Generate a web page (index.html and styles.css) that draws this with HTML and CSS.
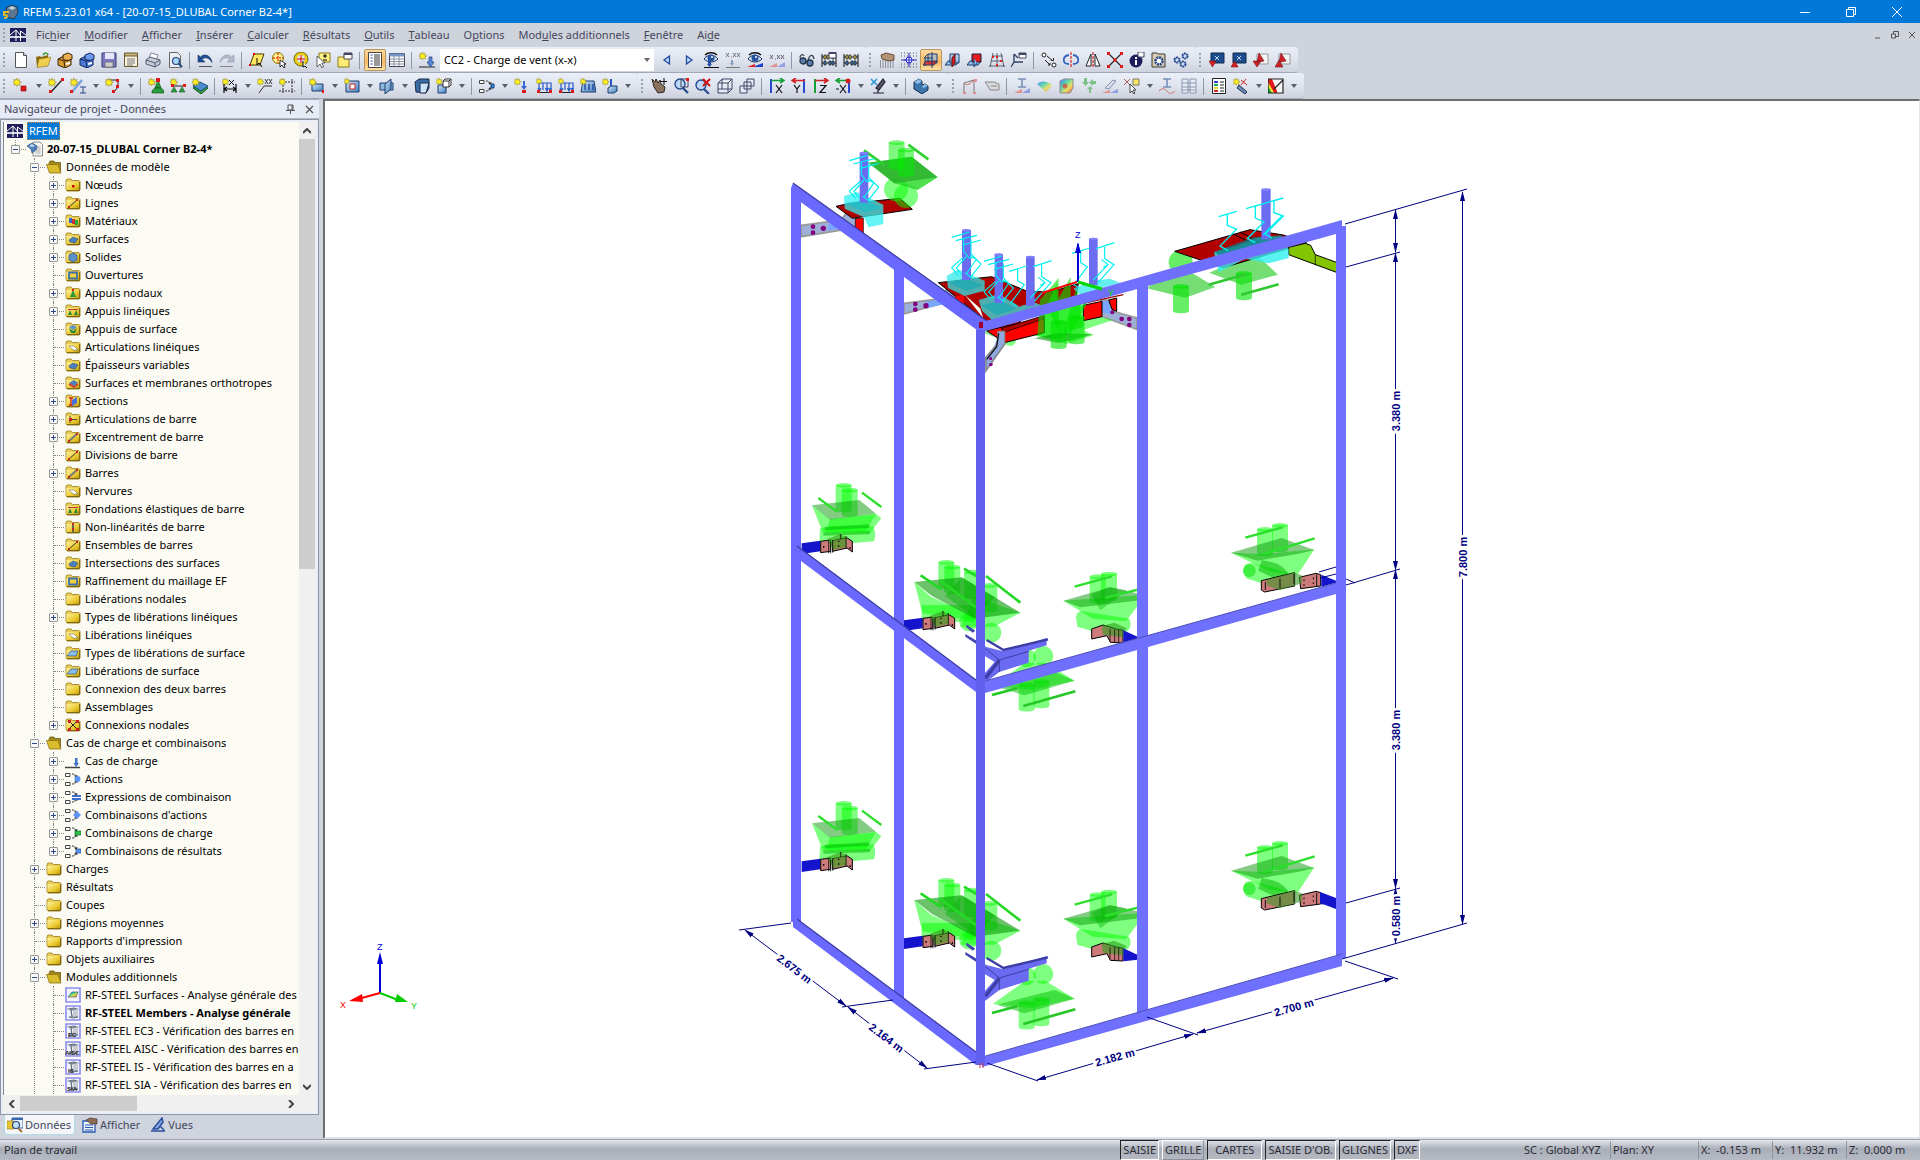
FILE: index.html
```html
<!DOCTYPE html>
<html lang="fr">
<head>
<meta charset="utf-8">
<title>RFEM 5.23.01 x64 - [20-07-15_DLUBAL Corner B2-4*]</title>
<link rel="stylesheet" href="styles.css">
</head>
<body>
<svg class="defs" aria-hidden="true">
  <defs>
    <linearGradient id="gold" x1="0" y1="0" x2="1" y2="1"><stop offset="0" stop-color="#fff2a0"/><stop offset=".6" stop-color="#ecc92e"/><stop offset="1" stop-color="#b8930f"/></linearGradient>
    <linearGradient id="steel" x1="0" y1="0" x2="1" y2="1"><stop offset="0" stop-color="#cfe4f7"/><stop offset="1" stop-color="#3f7fbf"/></linearGradient>
    <linearGradient id="rainbow" x1="0" y1="0" x2="1" y2="1"><stop offset="0" stop-color="#3060ff"/><stop offset=".35" stop-color="#30d0a0"/><stop offset=".65" stop-color="#f0e040"/><stop offset="1" stop-color="#f03020"/></linearGradient>
    <marker id="arr" viewBox="0 0 10 6" refX="9" refY="3" markerWidth="10" markerHeight="6" markerUnits="userSpaceOnUse" orient="auto-start-reverse"><path d="M0 0.5L10 3L0 5.5z" fill="#000080"/></marker>
  </defs>
  <symbol id="star" viewBox="0 0 16 16"><path d="M4 0l1 2.500 2-1-.5 2.300L9 4.500 6.800 5.500 7.500 8 5 7 4 9 3.200 7 1 7.800 1.500 5.500-.5 4.500 1.600 3.500 1 1.300 3.200 2.400z" fill="#ffee22" stroke="#8c8420" stroke-width=".6"/></symbol>
  <symbol id="bridge" viewBox="0 0 16 14"><path d="M0 0h16v14H0z" fill="#20205f"/><path d="M0 9h16" stroke="#fff" stroke-width="1.600"/><path d="M0 7L6 2v11M6 2l5 6M10.500 3v10M10.500 3L16 7" stroke="#fff" fill="none"/></symbol>
  <symbol id="folder" viewBox="0 0 16 14"><path d="M1 3V2l1-1h4l1.500 1.500H14l1 1V12l-1 1H2l-1-1z" fill="#e8ce58" stroke="#9c7f1c" stroke-width=".8"/><path d="M1.500 4H14.500v8.500h-13z" fill="url(#gold)"/><path d="M14.600 4v8.600H2" stroke="#77620f" fill="none"/></symbol>
  <symbol id="folder-open" viewBox="0 0 16 14"><path d="M3 3l1-2h4l1 1.500h5.500V12H4z" fill="#a48a1a" stroke="#6d5a0c" stroke-width=".8"/><path d="M.5 4.500H12l3 8.500H3.500z" fill="#d9bd2c" stroke="#8c7412" stroke-width=".8"/></symbol>
  <symbol id="model" viewBox="0 0 16 16"><path d="M6 1h7l2.500 2.500V15H6z" fill="#f4f4f4" stroke="#8a8a8a"/><path d="M8.500 6h5M8.500 8h5M8.500 10h5M8.500 12h5" stroke="#999" stroke-width=".8"/><path d="M0 5l5-3 5 3-1 4-4 3-1-4z" fill="#4d7fb8" stroke="#2a5080" stroke-width=".7"/><path d="M2 5l3-2 3 2-3 1z" fill="#c5ddf2"/></symbol>
  <symbol id="combi" viewBox="0 0 16 16"><path d="M.5 2.500h4.500v3H.5zM.5 11.500h4.500v3H.5z" fill="#fff" stroke="#444"/><path d="M7 3c3 0 4 1 4 3M7 13c3 0 4-1 4-3" stroke="#333" fill="none" stroke-dasharray="2 1"/><path d="M9 4.500h4l-2 2.500zM9 11.500h4L11 9z" fill="#333"/></symbol>
  <symbol id="module" viewBox="0 0 16 16"><path d="M1 1h14v14H1z" fill="#f3f3fb" stroke="#8c8cf0" stroke-width="1.600"/></symbol>
  <symbol id="ibeam" viewBox="0 0 16 16"><path d="M4 4l5-1 3 1-5 1zM6 5l1 7M4 12l5-1 4 1-5 1z" fill="#ddd" stroke="#5a6a7c" stroke-width="1.200"/><path d="M8 5l5-1v7l-5 1z" fill="#c8ccd2"/></symbol>
  <symbol id="doc" viewBox="0 0 16 16"><path d="M2.500 .5h8l3 3v12h-11z" fill="#fff" stroke="#555"/><path d="M10.500 .5v3h3" fill="#ddd" stroke="#555"/></symbol>
  <symbol id="openf" viewBox="0 0 16 16"><path d="M1 5l4-1 1 1 7-2v9L2 15z" fill="#8a6a10"/><path d="M4 7l12-2-3 9-11 1.500z" fill="#f0cf50" stroke="#8a6a10" stroke-width=".6"/><path d="M8 3c2-3 5-2 5 0" stroke="#3a9a2a" fill="none" stroke-width="1.500"/></symbol>
  <symbol id="cab-o" viewBox="0 0 16 16"><path d="M1 7l6-3 7 2v7l-6 3-7-3z" fill="#d99a32" stroke="#3b260c"/><path d="M6 3l5-2 4 2v4l-5 2-4-2z" fill="#e8b050" stroke="#3b260c"/><path d="M1 7l6 2 1 7M7 9l4-1" stroke="#3b260c" fill="none"/><path d="M9 11l4-1v2l-4 1z" fill="#fff"/></symbol>
  <symbol id="cab-b" viewBox="0 0 16 16"><path d="M1 7l6-3 7 2v7l-6 3-7-3z" fill="#4a78d8" stroke="#14285c"/><path d="M6 3l5-2 4 2v4l-5 2-4-2z" fill="#6c98f0" stroke="#14285c"/><path d="M1 7l6 2 1 7M7 9l4-1" stroke="#14285c" fill="none"/><path d="M9 11l4-1v2l-4 1z" fill="#fff"/></symbol>
  <symbol id="save" viewBox="0 0 16 16"><path d="M1 1h14v14H1z" fill="#7d78c4" stroke="#3a3a6a"/><path d="M4 1h9v6H4z" fill="#e6e6f8"/><path d="M4 10h8v5H4z" fill="#ccc" stroke="#555" stroke-width=".6"/></symbol>
  <symbol id="saveall" viewBox="0 0 16 16"><path d="M1.500 2.500h13v12h-13z" fill="#f8f4e0" stroke="#6a5a2a"/><path d="M1.500 1h13v3h-13z" fill="#c8b47c" stroke="#6a5a2a"/><path d="M4 7h8M4 9h8M4 11h8M4 13h6" stroke="#777"/></symbol>
  <symbol id="print" viewBox="0 0 16 16"><path d="M4 6l2-5 7 2-2 5z" fill="#fff" stroke="#889"/><path d="M1 8l4-3 10 3v4l-5 3-9-3z" fill="#c5cad8" stroke="#555c70"/><path d="M1 8l9 3 5-3M10 11v4" stroke="#555c70" fill="none"/></symbol>
  <symbol id="preview" viewBox="0 0 16 16"><path d="M2.500 .5h8l3 3v12h-11z" fill="#eceef2" stroke="#666"/><circle cx="9" cy="9" r="3.500" fill="#aad4f4" stroke="#234a80" stroke-width="1.200"/><path d="M11.500 11.500L15 15" stroke="#234a80" stroke-width="2"/></symbol>
  <symbol id="undo" viewBox="0 0 16 16"><path d="M1 3v7h7L5 7.500c3-3 7-2 10 3C14 3 7 1 3.500 5z" fill="#1f4f96" stroke="#12305c" stroke-width=".6"/><path d="M2 14.500h13" stroke="#555"/></symbol>
  <symbol id="redo" viewBox="0 0 16 16"><path d="M15 3v7H8l3-2.500c-3-3-7-2-10 3C2 3 9 1 12.500 5z" fill="#b4bccb" stroke="#8c95a8" stroke-width=".6"/><path d="M1 14.500h13" stroke="#888"/></symbol>
  <symbol id="plane" viewBox="0 0 16 16"><path d="M5 2h10l-4 11H1z" fill="#ffe860" stroke="#443c00"/><path d="M8 6v7l2-2 3 4" fill="none" stroke="#000"/><path d="M4 1h2v2H4zM0 12h2v2H0z" fill="#d00"/></symbol>
  <symbol id="pick" viewBox="0 0 16 16"><circle cx="7" cy="6" r="5.500" fill="#fff088" stroke="#8a7a10"/><path d="M7 1v10M2 6h10" stroke="#d00" stroke-dasharray="2 1"/><path d="M9 8v7l2-2 2 3 1-1-1-3h2z" fill="#fff" stroke="#000" stroke-width=".8"/></symbol>
  <symbol id="ring" viewBox="0 0 16 16"><circle cx="8" cy="7" r="5.500" fill="none" stroke="#e8cc10" stroke-width="3"/><circle cx="8" cy="7" r="7" fill="none" stroke="#554a00" stroke-width=".8"/><path d="M8 3v8M4 7h8" stroke="#d00"/><path d="M10 9v6l2-1 2 2" stroke="#000" fill="#fff"/></symbol>
  <symbol id="pm" viewBox="0 0 16 16"><path d="M4 1h11v9H4z" fill="#fff088" stroke="#8a7a10"/><path d="M8 4h4M10 2v4M8 8h4" stroke="#000"/><path d="M2 4v11l3-3 2 4 1.500-1L7 11h3z" fill="#fff" stroke="#444" stroke-width=".8"/></symbol>
  <symbol id="win2" viewBox="0 0 16 16"><path d="M1 5h11v10H1z" fill="#ffec78" stroke="#8a7a10"/><path d="M7 1h8v6H7z" fill="#fff" stroke="#444"/><path d="M7 1h8v2H7z" fill="#446"/></symbol>
  <symbol id="sheet" viewBox="0 0 16 16"><path d="M1.500 .5h13v15h-13z" fill="#fff" stroke="#444"/><path d="M3.500 3h2M3.500 6h2M3.500 9h2M3.500 12h2" stroke="#24a"/><path d="M7 3h6M7 5h6M7 7h6M7 9h6M7 11h6M7 13h6" stroke="#333"/></symbol>
  <symbol id="grid" viewBox="0 0 16 16"><path d="M.5 1.500h15v13H.5z" fill="#fff" stroke="#445"/><path d="M.5 1.500h15v3H.5z" fill="#7496c8"/><path d="M1 7h14M1 9.500h14M1 12h14M5 4v10M10 4v10" stroke="#88909c"/></symbol>
  <symbol id="ldstar" viewBox="0 0 16 16"><use href="#star" width="14" height="14"/><path d="M0 15h16" stroke="#222"/><path d="M10 5h3v5h2l-3.500 5L8 10h2z" fill="#5a8ad8" stroke="#1c3c7c" stroke-width=".7"/></symbol>
  <symbol id="tleft" viewBox="0 0 16 16"><path d="M10.500 4v8L5 8z" fill="#c0dcfc" stroke="#234aa0" stroke-width="1.300"/></symbol>
  <symbol id="tright" viewBox="0 0 16 16"><path d="M5.500 4v8L11 8z" fill="#c0dcfc" stroke="#234aa0" stroke-width="1.300"/></symbol>
  <symbol id="eye" viewBox="0 0 16 11"><path d="M1 7c3-5 10-5 14 0-4 4-10 4-14 0z" fill="#cfe0f8" stroke="#18305c"/><circle cx="8" cy="6" r="3.500" fill="#24549c"/><circle cx="9" cy="5" r="1" fill="#fff"/><path d="M2 3c3-3 9-3 12 0" stroke="#111" fill="none" stroke-width="1.300"/></symbol>
  <symbol id="eyeload" viewBox="0 0 16 16"><use href="#eye" width="16" height="11"/><path d="M5 8h3v4h1l-2.500 3L4 12h1z" fill="#2450a8"/><path d="M1 15.500h15" stroke="#111"/></symbol>
  <symbol id="xxload" viewBox="0 0 16 16"><path d="M1 1l3 4M4 1L1 5M6 5h1M8 1l3 4M11 1L8 5M12 1l3 4M15 1l-3 4" stroke="#778"/><path d="M6 8h2v3h1l-2 3-2-3h1z" fill="#8a9cc0"/><path d="M1 15.500h14" stroke="#777"/></symbol>
  <symbol id="eyeres" viewBox="0 0 16 16"><use href="#eye" width="16" height="11"/><path d="M0 15h8v-3z" fill="#d22"/><path d="M16 11v4H8v-1z" fill="#24c"/></symbol>
  <symbol id="xxres" viewBox="0 0 16 16"><path d="M1 3l3 4M4 3L1 7M6 7h1M8 3l3 4M11 3L8 7M12 3l3 4M15 3l-3 4" stroke="#667"/><path d="M0 15h8v-4z" fill="#e09090"/><path d="M16 10v5H8z" fill="#98a0e0"/></symbol>
  <symbol id="specs" viewBox="0 0 16 16"><path d="M1 6C1 2 4 2 5 4M9 8c2-6 5-6 6-1M6 9l2 1" stroke="#345" fill="none" stroke-width="1.300"/><circle cx="4" cy="9" r="3" fill="#5c80b4" stroke="#234" stroke-width="1.300"/><circle cx="11" cy="11" r="3" fill="#5c80b4" stroke="#234" stroke-width="1.300"/></symbol>
  <symbol id="abacus" viewBox="0 0 16 16"><path d="M1 2v13M15 2v13M1 5h14M1 11h14" stroke="#111" fill="none"/><path d="M3 3h2v4H3zM6 3h2v4H6zM11 3h2v4h-2z" fill="#e8d060" stroke="#111" stroke-width=".7"/><path d="M3 9h2v4H3zM8 9h2v4H8zM11 9h2v4h-2z" fill="#48c" stroke="#111" stroke-width=".7"/></symbol>
  <symbol id="abacus2" viewBox="0 0 16 16"><use href="#abacus"/><path d="M8 0h7v6H8z" fill="#fff" stroke="#446"/><path d="M8 0h7v2H8z" fill="#446"/></symbol>
  <symbol id="hand" viewBox="0 0 16 16"><path d="M2 3l5-2 8 2v5l-5 1-7-2z" fill="#b49474" stroke="#4c3420" stroke-width=".8"/><path d="M1 9h14M1 11h14M1 13h14M1 15h14" stroke="#444" stroke-dasharray="1 1.500"/></symbol>
  <symbol id="snap" viewBox="0 0 16 16"><path d="M0 1h16M0 4h16M0 12h16M0 15h16M0 8h16" stroke="#555" stroke-dasharray="1 2"/><circle cx="8" cy="8" r="3" fill="#fff" stroke="#22c"/><path d="M8 1v14M1 8h14" stroke="#22c"/></symbol>
  <symbol id="wpl" viewBox="0 0 16 16"><path d="M5 2h9v9H5zM1 6l4-4M2 14V6h8" fill="#8cbcf0" fill-opacity=".6" stroke="#1c3c6c"/><path d="M3 9h11l-3 4H0z" fill="#e02020" fill-opacity=".8" stroke="#1c3c6c"/><path d="M9 0v16" stroke="#1c3c6c"/></symbol>
  <symbol id="wpl2" viewBox="0 0 16 16"><path d="M3 9h11l-3 4H0z" fill="#8cbcf0" stroke="#1c3c6c"/><path d="M5 2h9v9H5z" fill="#9cc8f4" fill-opacity=".7" stroke="#1c3c6c"/><path d="M7 6l3-4v9l-3 4z" fill="#e02020" stroke="#601010"/></symbol>
  <symbol id="wpl3" viewBox="0 0 16 16"><path d="M3 9h11l-3 4H0z" fill="#8cbcf0" stroke="#1c3c6c"/><path d="M5 2h9v8H5z" fill="#e81c1c" stroke="#1c1c3c"/><path d="M7 6v9l3-4" fill="#8cbcf0" stroke="#1c3c6c"/></symbol>
  <symbol id="linegrid" viewBox="0 0 16 16"><path d="M4 1l-3 14M8 1v14M12 1l3 14M3 4h11M2 9h12M0 14h16" stroke="#445" fill="none" stroke-width=".8"/><path d="M3 4h2v2H3zM11 8h2v2h-2zM7 4h2v2H7zM7 12h2v2H7z" fill="#e02020"/></symbol>
  <symbol id="axes" viewBox="0 0 16 16"><path d="M3 2v8l-3 5M3 10h9M3 2l4 4" stroke="#346" fill="none" stroke-width="1.400"/><path d="M8 1h7v5H8z" fill="#fff" stroke="#446"/><path d="M8 1h7v2H8z" fill="#446"/></symbol>
  <symbol id="copy" viewBox="0 0 16 16"><circle cx="3" cy="3" r="2" fill="#fff" stroke="#222"/><circle cx="13" cy="13" r="2" fill="#fff" stroke="#222"/><path d="M6 4l6 5M10 8.500h2.500V6M4 8l5 5M7 13h2v-2" stroke="#222" fill="none"/></symbol>
  <symbol id="rot" viewBox="0 0 16 16"><path d="M6 3C-1 4-1 12 6 12M10 3c7 1 7 9 0 9" stroke="#3464c0" fill="none" stroke-width="1.800"/><path d="M8 0v16" stroke="#d00" stroke-dasharray="3 1"/></symbol>
  <symbol id="mirror" viewBox="0 0 16 16"><path d="M6 2v12H1zM10 2v12h5z" fill="#fff" stroke="#222"/><path d="M8 0v16" stroke="#d00" stroke-dasharray="3 1"/></symbol>
  <symbol id="xnode" viewBox="0 0 16 16"><path d="M1 1l14 14M15 1L1 15" stroke="#222" stroke-width="1.200"/><path d="M0 0h3v3H0zM13 0h3v3h-3zM0 13h3v3H0zM13 13h3v3h-3zM6.500 6.500h3v3h-3z" fill="#e01818"/></symbol>
  <symbol id="info" viewBox="0 0 16 16"><circle cx="7" cy="9" r="6.500" fill="#1c1c5c"/><path d="M7 8v5M7 5v2" stroke="#fff" stroke-width="2"/><path d="M9 0h6v5H9z" fill="#fff" stroke="#446"/></symbol>
  <symbol id="gearbox" viewBox="0 0 16 16"><path d="M1 1h5l1 1h7v13H1z" fill="#d8ccb0" stroke="#3a3a3a"/><circle cx="8" cy="9" r="3.500" fill="#fff" stroke="#24488c" stroke-width="2.500" stroke-dasharray="2 .7"/></symbol>
  <symbol id="gears" viewBox="0 0 16 16"><circle cx="4" cy="8" r="2.500" fill="#cfe0f8" stroke="#24488c" stroke-width="2" stroke-dasharray="2 .6"/><circle cx="12" cy="4" r="2.500" fill="#cfe0f8" stroke="#24488c" stroke-width="2" stroke-dasharray="2 .6"/><circle cx="10" cy="12" r="2.500" fill="#cfe0f8" stroke="#24488c" stroke-width="2" stroke-dasharray="2 .6"/></symbol>
  <symbol id="dnx" viewBox="0 0 16 16"><path d="M2 1h13v10H2z" fill="#1c4c8c" stroke="#0c2850"/><path d="M6 4l4 4M10 4L6 8" stroke="#bcd8f8"/><path d="M0 9h7l-3.500 6z" fill="#d82020" stroke="#7c1010" stroke-width=".6"/></symbol>
  <symbol id="upx" viewBox="0 0 16 16"><path d="M2 1h13v10H2z" fill="#1c4c8c" stroke="#0c2850"/><path d="M6 4l4 4M10 4L6 8" stroke="#bcd8f8"/><path d="M0 15h7l-3.500-6z" fill="#d82020" stroke="#7c1010" stroke-width=".6"/></symbol>
  <symbol id="pdfd" viewBox="0 0 16 16"><path d="M4 2h11v10H4z" fill="#f4f4f4" stroke="#999"/><path d="M6 1l5 8-5 1-2 0zM0 9h8l-4 6z" fill="#d02028" stroke="#70141c" stroke-width=".6"/></symbol>
  <symbol id="pdfu" viewBox="0 0 16 16"><path d="M4 2h11v10H4z" fill="#f4f4f4" stroke="#999"/><path d="M6 1l5 8-5 1-2 0zM0 15h8L4 8z" fill="#d02028" stroke="#70141c" stroke-width=".6"/></symbol>
  <symbol id="nnode" viewBox="0 0 16 16"><use href="#star" width="15" height="15"/><path d="M8 8h5v5H8z" fill="#e01818" stroke="#800" stroke-width=".6"/></symbol>
  <symbol id="nline" viewBox="0 0 16 16"><use href="#star" width="15" height="15"/><path d="M3 14L14 2" stroke="#222" stroke-width="1.300"/><path d="M1 12h3v3H1zM13 0h3v3h-3z" fill="#e01818"/></symbol>
  <symbol id="nmem" viewBox="0 0 16 16"><use href="#star" width="15" height="15"/><path d="M2 14L12 2" stroke="#7aa4dc" stroke-width="2.500"/><path d="M10 9h6M13 9v6M10 15h6" stroke="#24488c"/><path d="M0 12h3v3H0z" fill="#e01818"/></symbol>
  <symbol id="nset" viewBox="0 0 16 16"><path d="M4 2h9v7l-4 5" stroke="#222" fill="none"/><use href="#star" width="15" height="15"/><path d="M11 1h3v3h-3zM11 7h3v3h-3zM7 12h3v3H7z" fill="#e01818"/></symbol>
  <symbol id="nsup" viewBox="0 0 16 16"><path d="M10 2l3 8H7zM4 13c3-5 9-5 12 0v2H4z" fill="#2c9c3c" stroke="#145c1c" stroke-width=".7"/><path d="M8 0h4v4H8z" fill="#e01818"/><use href="#star" width="14" height="14"/></symbol>
  <symbol id="nlsup" viewBox="0 0 16 16"><use href="#star" width="14" height="14"/><path d="M2 8h13" stroke="#222"/><path d="M4 9l3 5H1zM12 9l3 5H9z" fill="#2c9c3c" stroke="#145c1c" stroke-width=".6"/><path d="M1 6h3v3H1zM13 6h3v3h-3z" fill="#e01818"/></symbol>
  <symbol id="nssup" viewBox="0 0 16 16"><path d="M1 10l7-4 8 4-7 6z" fill="#2c9c3c" stroke="#145c1c"/><path d="M1 8l7-4 8 4-7 5z" fill="#4c8ccc" stroke="#1c4c7c"/><use href="#star" width="14" height="14"/></symbol>
  <symbol id="ndim" viewBox="0 0 16 16"><use href="#star" width="13" height="13"/><path d="M2 6v9M14 6v9M2 11h12M5 9l-3 2 3 2M11 9l3 2-3 2" stroke="#111" fill="none" stroke-width="1.200"/><path d="M7 2l5 5M12 2L7 7" stroke="#111"/></symbol>
  <symbol id="ntxt" viewBox="0 0 16 16"><use href="#star" width="13" height="13"/><path d="M8 1l3 5M11 1L8 6M12 1l3 5M15 1l-3 5" stroke="#444"/><path d="M2 15L7 8h8" stroke="#333" fill="none"/></symbol>
  <symbol id="ngrid" viewBox="0 0 16 16"><path d="M4 1v15M13 1v15M0 4h16M0 13h16" stroke="#333" stroke-dasharray="2 1"/><use href="#star" width="13" height="13"/></symbol>
  <symbol id="nsurf" viewBox="0 0 16 16"><path d="M3 6h11v7H3z" fill="url(#steel)" stroke="#1c3c6c"/><use href="#star" width="14" height="14"/><path d="M13 12h2v3h-2z" fill="#e01818"/></symbol>
  <symbol id="nopen" viewBox="0 0 16 16"><path d="M2 3h13v11H2z" fill="url(#steel)" stroke="#1c3c6c"/><path d="M6 6h5v5H6z" fill="#fff" stroke="#c22"/><use href="#star" width="11" height="11"/></symbol>
  <symbol id="nint" viewBox="0 0 16 16"><path d="M1 5h13v7H1z" fill="#8cb8e0" stroke="#1c3c6c"/><path d="M6 6l6-5v10l-6 5z" fill="url(#steel)" stroke="#1c3c6c"/></symbol>
  <symbol id="nsolid" viewBox="0 0 16 16"><path d="M1 4l4-3h10v9l-3 5-10-1z" fill="#3c6ca4" stroke="#1c2c4c"/><path d="M6 5h9l-3 10H6z" fill="#cfe4f7" stroke="#1c2c4c"/></symbol>
  <symbol id="ncube" viewBox="0 0 16 16"><path d="M2 7h8v8H2z" fill="url(#steel)" stroke="#1c3c6c"/><path d="M7 3l2-2h6v6l-2 2H7zM7 3h6v6M13 3l2-2" fill="#fff" stroke="#333"/><use href="#star" width="12" height="12"/></symbol>
  <symbol id="combi-t" viewBox="0 0 16 16"><use href="#combi"/><path d="M12 6h3v4h-3z" fill="#38c" stroke="#148"/></symbol>
  <symbol id="nload" viewBox="0 0 16 16"><use href="#star" width="13" height="13"/><path d="M9 3h2v5h2l-3 4-3-4h2z" fill="#3868d0"/><path d="M8 12h4v3H8z" fill="#e01818"/></symbol>
  <symbol id="nlload" viewBox="0 0 16 16"><path d="M3 5h12v8M3 5v8M7 5v7M11 5v7M2 10l1.500 3L5 10M9.500 10l1.500 3 1.500-3M13.500 10l1 3 1-3" stroke="#2858c8" fill="none" stroke-width="1.200"/><path d="M1 14.500h15" stroke="#222"/><path d="M1 12h3v3H1zM13 12h3v3h-3z" fill="#e01818"/><use href="#star" width="11" height="11"/></symbol>
  <symbol id="nsload" viewBox="0 0 16 16"><path d="M3 3h11l2 11H1z" fill="url(#steel)" stroke="#1c3c6c"/><path d="M5 6v6M9 6v6M13 6v6" stroke="#1c3c9c" stroke-width="1.300"/><use href="#star" width="12" height="12"/></symbol>
  <symbol id="nfree" viewBox="0 0 16 16"><use href="#star" width="13" height="13"/><path d="M9 1v7" stroke="#2858c8" stroke-width="2"/><path d="M6 10l3-2h6v5l-3 2H6z" fill="url(#steel)" stroke="#1c3c6c"/></symbol>
  <symbol id="move" viewBox="0 0 16 16"><path d="M1 1l3 3 1-3 2 4 2-3 1 4 4 3-1 5-6 1-4-6z" fill="#8a7460" stroke="#30241c"/><path d="M13 0v7M10 3.500h6" stroke="#111"/></symbol>
  <symbol id="zoomw" viewBox="0 0 16 16"><circle cx="7" cy="6" r="5" fill="#bcd8f4" stroke="#24488c" stroke-width="1.400"/><path d="M10 10l5 5" stroke="#24488c" stroke-width="2.200"/><path d="M8 1h7v8H8z" fill="none" stroke="#446"/><path d="M13 0h3v3h-3z" fill="#e01818"/></symbol>
  <symbol id="zoomx" viewBox="0 0 16 16"><circle cx="6" cy="7" r="5" fill="#bcd8f4" stroke="#24488c" stroke-width="1.400"/><path d="M9 11l5 5" stroke="#24488c" stroke-width="2.200"/><path d="M8 1l7 7M15 1L8 8" stroke="#d01010" stroke-width="2"/></symbol>
  <symbol id="cube" viewBox="0 0 16 16"><path d="M1 5l4-4h10v10l-4 4H1zM1 5h10v10M11 5l4-4M5 1v10H1M5 11h10" fill="#eef4fc" fill-opacity=".6" stroke="#446"/></symbol>
  <symbol id="cubes" viewBox="0 0 16 16"><path d="M8 1h7v7H8zM5 4h7v7H5zM1 8h7v7H1z" fill="#e4ecf8" stroke="#446"/></symbol>
  <symbol id="vx" viewBox="0 0 16 16"><path d="M2 1v14" stroke="#2848d0" stroke-width="2"/><path d="M2 2.500h13M11 0l4 2.500L11 5" stroke="#18a038" stroke-width="1.600" fill="none"/><path d="M7 7l6 8M13 7l-6 8" stroke="#111" stroke-width="1.200"/></symbol>
  <symbol id="vy" viewBox="0 0 16 16"><path d="M13 1v14" stroke="#2848d0" stroke-width="2"/><path d="M14 2.500H1M5 0L1 2.500 5 5" stroke="#d02020" stroke-width="1.600" fill="none"/><path d="M3 7l3 4 3-4M6 11v4" stroke="#111" stroke-width="1.200" fill="none"/></symbol>
  <symbol id="vz" viewBox="0 0 16 16"><path d="M2 1v14" stroke="#18a038" stroke-width="2"/><path d="M2 2.500h13M11 0l4 2.500L11 5" stroke="#d02020" stroke-width="1.600" fill="none"/><path d="M7 7.500h6l-6 7h6" stroke="#111" stroke-width="1.200" fill="none"/></symbol>
  <symbol id="vmx" viewBox="0 0 16 16"><path d="M14 1v14" stroke="#2848d0" stroke-width="2"/><path d="M14 2.500H1M5 0L1 2.500 5 5" stroke="#18a038" stroke-width="1.600" fill="none"/><circle cx="13" cy="3" r="2.500" fill="#d02020"/><path d="M1 11h3M5 7l6 8M11 7l-6 8" stroke="#111" stroke-width="1.200"/></symbol>
  <symbol id="scope" viewBox="0 0 16 16"><path d="M13 1L6 10l3 2 6-8zM3 15h11M8 12v3" fill="#556" stroke="#223" stroke-width="1.200"/><path d="M1 1l6 6M7 1L1 7" stroke="#2898d8" stroke-width="1.600"/></symbol>
  <symbol id="solid" viewBox="0 0 16 16"><path d="M1 4l5-3 3 2v4l3-1 3 2v4l-6 4-8-5z" fill="#3c74ac" stroke="#14304c"/><path d="M1 4l5-3 3 2-4 3zM9 8l3-2 3 2-5 2z" fill="#8cbce4"/></symbol>
  <symbol id="moment" viewBox="0 0 16 16"><path d="M2 15V5l10-3v13" stroke="#777" fill="none"/><path d="M2 5c3 4 7 0 10-3" stroke="#c66" fill="none"/><path d="M1 14h3v2H1zM11 14h3v2h-3zM12 1h3v3h-3z" fill="#e09090"/></symbol>
  <symbol id="label" viewBox="0 0 16 16"><path d="M1 4h9l5 2v6H6L4 8z" fill="#d8d8dc" stroke="#888"/><path d="M7 8h6" stroke="#888"/></symbol>
  <symbol id="ires" viewBox="0 0 16 16"><path d="M4 1h8M8 1v8M4 9h8" stroke="#7890b8" stroke-width="1.600"/><path d="M0 15h8v-4z" fill="#e09090"/><path d="M16 10v5H8z" fill="#90a0e0"/></symbol>
  <symbol id="sres" viewBox="0 0 16 16"><path d="M1 6c5-4 10-3 15 1l-6 7z" fill="url(#rainbow)" opacity=".75"/></symbol>
  <symbol id="vres" viewBox="0 0 16 16"><path d="M2 3l4-2h9v9l-3 5H2z" fill="url(#rainbow)" stroke="#777" opacity=".8"/><circle cx="7" cy="8" r="2.500" fill="#e04030" opacity=".7"/></symbol>
  <symbol id="reac" viewBox="0 0 16 16"><path d="M4 0h3v4h2L5.500 8 2 4h2zM16 3v3h-3v2L9 4.500 13 1v2zM9 15v-4H7l3-3 3 3h-2v4z" fill="#7cc088"/></symbol>
  <symbol id="pen" viewBox="0 0 16 16"><path d="M3 10l8-8 3 1-7 8z" fill="#d4dcec" stroke="#8894ac"/><path d="M0 15h8v-3z" fill="#e09090"/><path d="M16 11v4H8z" fill="#90a0e0"/></symbol>
  <symbol id="selx" viewBox="0 0 16 16"><path d="M9 1h6v6H9z" fill="#ffe460" stroke="#776"/><path d="M0 1l6 6M6 1L0 7" stroke="#b06060"/><path d="M6 6v9l2-2 2 3 1-1-2-3h3z" fill="#fff" stroke="#444"/></symbol>
  <symbol id="iwave" viewBox="0 0 16 16"><path d="M4 1h8M8 1v8M4 9h8" stroke="#7890b8" stroke-width="1.600"/><path d="M0 13c3-3 6-3 8 0s5 3 8 0" stroke="#d07070" fill="none"/></symbol>
  <symbol id="tab4" viewBox="0 0 16 16"><path d="M1 1h6v14H1zM9 1h6v14H9zM1 5h14M1 9h14M1 12h14" stroke="#8c98b0" fill="#e8ecf4"/></symbol>
  <symbol id="legend" viewBox="0 0 16 16"><path d="M1.500 .5h13v15h-13z" fill="#fff" stroke="#222"/><path d="M3 3h4v2H3z" fill="#24c"/><path d="M3 6h4v2H3z" fill="#2a4"/><path d="M3 9h4v2H3z" fill="#dd2"/><path d="M3 12h4v2H3z" fill="#d22"/><path d="M9 4h4M9 7h4M9 10h4M9 13h4" stroke="#222"/></symbol>
  <symbol id="torch" viewBox="0 0 16 16"><use href="#star" width="13" height="13"/><path d="M8 2l6 5M13 1L8 7" stroke="#c22"/><path d="M6 7l8 7-2 2-8-6z" fill="#6a8ab8" stroke="#234"/></symbol>
  <symbol id="rain" viewBox="0 0 16 16"><path d="M0 1h15v14H0z" fill="#f4f4f4"/><path d="M0 1h4l5 12v2H6L0 5z" fill="#e01818"/><path d="M0 4l6 11H4L0 10z" fill="#f8e820"/><path d="M0 8l4 7H0z" fill="#18a838"/><path d="M6 11L15 2M0 1h15v14H0z" stroke="#222" stroke-width="1.200" fill="none"/></symbol>

  <symbol id="f-node" viewBox="0 0 16 14"><use href="#folder"/><path d="M7 7h2.500v2.500H7z" fill="#c00"/></symbol>
  <symbol id="f-line" viewBox="0 0 16 14"><use href="#folder"/><path d="M4 11l8-7" stroke="#333"/><path d="M3 10h2v2H3zM11 3h2v2h-2z" fill="#c22"/></symbol>
  <symbol id="f-mat" viewBox="0 0 16 14"><use href="#folder"/><path d="M4 4h3v5H4z" fill="#36c"/><path d="M7 5h3v5H7z" fill="#c33"/><path d="M10 6h3v5h-3z" fill="#2a4"/></symbol>
  <symbol id="f-sec" viewBox="0 0 16 14"><use href="#folder"/><path d="M4 4h4M6 4v7M4 11h4" stroke="#c22" stroke-width="1.300"/><path d="M7 6l5-3v6l-5 3z" fill="#4a70e0"/></symbol>
  <symbol id="f-blue" viewBox="0 0 16 14"><use href="#folder"/><path d="M4 8l4-3 5 2-3 4-5-1z" fill="#4a80c0" stroke="#28508c" stroke-width=".6"/></symbol>
  <symbol id="f-cube" viewBox="0 0 16 14"><use href="#folder"/><path d="M4 5l4-2 4 2v5l-4 2-4-2z" fill="#5c90c8" stroke="#28508c" stroke-width=".7"/></symbol>
  <symbol id="f-open" viewBox="0 0 16 14"><use href="#folder"/><path d="M4 4.500h8v6H4z" fill="#f0d040" stroke="#3c70a8" stroke-width="1.800"/></symbol>
  <symbol id="f-sup" viewBox="0 0 16 14"><use href="#folder"/><path d="M8 4l3 7H5z" fill="#2a9a3a"/><path d="M7 3h2v2H7z" fill="#c22"/></symbol>
  <symbol id="f-lsup" viewBox="0 0 16 14"><use href="#folder"/><path d="M3 5h10v1H3z" fill="#c33"/><path d="M5 6l2 5H3zM11 6l2 5H9z" fill="#2a8a3a"/></symbol>
  <symbol id="f-ssup" viewBox="0 0 16 14"><use href="#folder"/><path d="M4 5l4-2 4 2-4 3z" fill="#5c90c8"/><path d="M4 6l4 3 4-3-2 5H6z" fill="#2a8a3a"/></symbol>
  <symbol id="f-white" viewBox="0 0 16 14"><use href="#folder"/><path d="M4 6l5 0 4 4H8z" fill="#fff" stroke="#777" stroke-width=".6"/></symbol>
  <symbol id="f-red" viewBox="0 0 16 14"><use href="#folder"/><path d="M4 7l5-3 4 3-4 3z" fill="#4a80c0"/><path d="M4 8l5 3 4-3" stroke="#c33" stroke-width="1.500" fill="none"/></symbol>
  <symbol id="f-bar" viewBox="0 0 16 14"><use href="#folder"/><path d="M4 11l8-7" stroke="#777" stroke-width="2"/><path d="M11 3h2v2h-2zM3 10h2v2H3z" fill="#c22"/></symbol>
  <symbol id="f-hinge" viewBox="0 0 16 14"><use href="#folder"/><path d="M5 4v7M5 7.500h7" stroke="#444"/><path d="M4 6h3v3H4z" fill="#c22"/></symbol>
  <symbol id="f-non" viewBox="0 0 16 14"><use href="#folder"/><path d="M8 3v9" stroke="#345" stroke-width="1.500"/><path d="M7 3h2v2H7zM7 8h2v2H7z" fill="#c22"/></symbol>
  <symbol id="f-surf" viewBox="0 0 16 14"><use href="#folder"/><path d="M2 10l4-5h7l-2 5z" fill="#8cc0ec" stroke="#28508c" stroke-width=".7"/></symbol>
  <symbol id="f-x" viewBox="0 0 16 14"><use href="#folder"/><path d="M4 3l8 8M12 3l-8 8" stroke="#222"/><path d="M3 2h3v3H3zM11 2h3v3h-3zM3 10h3v3H3zM11 10h3v3h-3z" fill="#c22"/></symbol>
</svg>

<div class="app">
  <header class="titlebar">
    <svg class="ic" viewBox="0 0 16 16"><path d="M4 4l5-3 6 2 1 6-4 6-7-2z" fill="#5c7890" stroke="#24384c"/><path d="M6 4l4-2 4 2-4 2z" fill="#b8ccdc"/><path d="M7 8H2v3c4-1 4 3 0 3" fill="none" stroke="#f0c020" stroke-width="1.800"/></svg>
    <h1>RFEM 5.23.01 x64 - [20-07-15_DLUBAL Corner B2-4*]</h1>
    <div class="wincontrols">
      <button aria-label="Réduire"><svg width="10" height="10"><path d="M0 5.500h10" stroke="#fff"/></svg></button>
      <button aria-label="Restaurer"><svg width="10" height="10"><path d="M.5 2.500h7v7h-7zM2.500 2.500v-2h7v7h-2" stroke="#fff" fill="none"/></svg></button>
      <button aria-label="Fermer"><svg width="10" height="10"><path d="M0 0l10 10M10 0L0 10" stroke="#fff"/></svg></button>
    </div>
  </header>

  <nav class="menubar">
    <span class="grip"></span>
    <svg class="logo"><use href="#bridge"/></svg>
    <button>Fic<u>h</u>ier</button><button><u>M</u>odifier</button><button><u>A</u>fficher</button><button><u>I</u>nsérer</button><button><u>C</u>alculer</button><button><u>R</u>ésultats</button><button><u>O</u>utils</button><button><u>T</u>ableau</button><button>O<u>p</u>tions</button><button>Mod<u>u</u>les additionnels</button><button><u>F</u>enêtre</button><button>Ai<u>d</u>e</button>
    <div class="mdi">
      <button aria-label="Réduire la vue"><svg width="8" height="8"><path d="M1 7h5" stroke="#555"/></svg></button>
      <button aria-label="Restaurer la vue"><svg width="8" height="8"><path d="M.5 3h4v4h-4zM2.500 3V.5h5v5h-3" stroke="#555" fill="none"/></svg></button>
      <button aria-label="Fermer la vue"><svg width="8" height="8"><path d="M1 1l6 6M7 1L1 7" stroke="#555"/></svg></button>
    </div>
  </nav>

  <div class="toolrow">
    <div class="toolbar">
      <span class="grip"></span>
      <button class="tb"><svg class="ic"><use href="#doc"/></svg></button>
      <button class="tb"><svg class="ic"><use href="#openf"/></svg></button>
      <button class="tb"><svg class="ic"><use href="#cab-o"/></svg></button>
      <button class="tb"><svg class="ic"><use href="#cab-b"/></svg></button>
      <button class="tb"><svg class="ic"><use href="#save"/></svg></button>
      <button class="tb"><svg class="ic"><use href="#saveall"/></svg></button>
      <button class="tb"><svg class="ic"><use href="#print"/></svg></button>
      <button class="tb"><svg class="ic"><use href="#preview"/></svg></button>
      <i class="sep"></i>
      <button class="tb"><svg class="ic"><use href="#undo"/></svg></button>
      <button class="tb"><svg class="ic"><use href="#redo"/></svg></button>
      <i class="sep"></i>
      <button class="tb"><svg class="ic"><use href="#plane"/></svg></button>
      <button class="tb"><svg class="ic"><use href="#pick"/></svg></button>
      <button class="tb"><svg class="ic"><use href="#ring"/></svg></button>
      <button class="tb"><svg class="ic"><use href="#pm"/></svg></button>
      <button class="tb"><svg class="ic"><use href="#win2"/></svg></button>
      <i class="sep"></i>
      <button class="tb on"><svg class="ic"><use href="#sheet"/></svg></button>
      <button class="tb"><svg class="ic"><use href="#grid"/></svg></button>
      <i class="sep"></i>
      <button class="tb"><svg class="ic"><use href="#ldstar"/></svg></button>
      <span class="combo"><select aria-label="Cas de charge"><option>CC2 - Charge de vent (x-x)</option></select></span>
      <button class="tb"><svg class="ic"><use href="#tleft"/></svg></button>
      <button class="tb"><svg class="ic"><use href="#tright"/></svg></button>
      <button class="tb"><svg class="ic"><use href="#eyeload"/></svg></button>
      <button class="tb"><svg class="ic"><use href="#xxload"/></svg></button>
      <button class="tb"><svg class="ic"><use href="#eyeres"/></svg></button>
      <button class="tb"><svg class="ic"><use href="#xxres"/></svg></button>
      <i class="sep"></i>
      <button class="tb"><svg class="ic"><use href="#specs"/></svg></button>
      <button class="tb"><svg class="ic"><use href="#abacus2"/></svg></button>
      <button class="tb"><svg class="ic"><use href="#abacus"/></svg></button>
    </div>
    <div class="toolbar">
      <span class="grip"></span>
      <button class="tb"><svg class="ic"><use href="#hand"/></svg></button>
      <button class="tb"><svg class="ic"><use href="#snap"/></svg></button>
      <button class="tb on"><svg class="ic"><use href="#wpl"/></svg></button>
      <button class="tb"><svg class="ic"><use href="#wpl2"/></svg></button>
      <button class="tb"><svg class="ic"><use href="#wpl3"/></svg></button>
      <button class="tb"><svg class="ic"><use href="#linegrid"/></svg></button>
      <button class="tb"><svg class="ic"><use href="#axes"/></svg></button>
      <i class="sep"></i>
      <button class="tb"><svg class="ic"><use href="#copy"/></svg></button>
      <button class="tb"><svg class="ic"><use href="#rot"/></svg></button>
      <button class="tb"><svg class="ic"><use href="#mirror"/></svg></button>
      <button class="tb"><svg class="ic"><use href="#xnode"/></svg></button>
      <button class="tb"><svg class="ic"><use href="#info"/></svg></button>
      <button class="tb"><svg class="ic"><use href="#gearbox"/></svg></button>
      <button class="tb"><svg class="ic"><use href="#gears"/></svg></button>
    </div>
    <div class="toolbar">
      <span class="grip"></span>
      <button class="tb"><svg class="ic"><use href="#dnx"/></svg></button>
      <button class="tb"><svg class="ic"><use href="#upx"/></svg></button>
      <button class="tb"><svg class="ic"><use href="#pdfd"/></svg></button>
      <button class="tb"><svg class="ic"><use href="#pdfu"/></svg></button>
    </div>
  </div>

  <div class="toolrow">
    <div class="toolbar">
      <span class="grip"></span>
      <button class="tb"><svg class="ic"><use href="#nnode"/></svg></button><button class="dd"></button>
      <button class="tb"><svg class="ic"><use href="#nline"/></svg></button>
      <button class="tb"><svg class="ic"><use href="#nmem"/></svg></button><button class="dd"></button>
      <button class="tb"><svg class="ic"><use href="#nset"/></svg></button><button class="dd"></button>
      <i class="sep"></i>
      <button class="tb"><svg class="ic"><use href="#nsup"/></svg></button>
      <button class="tb"><svg class="ic"><use href="#nlsup"/></svg></button>
      <button class="tb"><svg class="ic"><use href="#nssup"/></svg></button>
      <i class="sep"></i>
      <button class="tb"><svg class="ic"><use href="#ndim"/></svg></button><button class="dd"></button>
      <button class="tb"><svg class="ic"><use href="#ntxt"/></svg></button>
      <button class="tb"><svg class="ic"><use href="#ngrid"/></svg></button>
      <i class="sep"></i>
      <button class="tb"><svg class="ic"><use href="#nsurf"/></svg></button><button class="dd"></button>
      <button class="tb"><svg class="ic"><use href="#nopen"/></svg></button><button class="dd"></button>
      <button class="tb"><svg class="ic"><use href="#nint"/></svg></button><button class="dd"></button>
      <button class="tb"><svg class="ic"><use href="#nsolid"/></svg></button>
      <button class="tb"><svg class="ic"><use href="#ncube"/></svg></button><button class="dd"></button>
      <i class="sep"></i>
      <button class="tb"><svg class="ic"><use href="#combi-t"/></svg></button><button class="dd"></button>
      <button class="tb"><svg class="ic"><use href="#nload"/></svg></button>
      <button class="tb"><svg class="ic"><use href="#nlload"/></svg></button>
      <button class="tb"><svg class="ic"><use href="#nlload"/></svg></button>
      <button class="tb"><svg class="ic"><use href="#nsload"/></svg></button>
      <button class="tb"><svg class="ic"><use href="#nfree"/></svg></button><button class="dd"></button>
    </div>
    <div class="toolbar">
      <span class="grip"></span>
      <button class="tb"><svg class="ic"><use href="#move"/></svg></button>
      <button class="tb"><svg class="ic"><use href="#zoomw"/></svg></button>
      <button class="tb"><svg class="ic"><use href="#zoomx"/></svg></button>
      <button class="tb"><svg class="ic"><use href="#cube"/></svg></button>
      <button class="tb"><svg class="ic"><use href="#cubes"/></svg></button>
      <i class="sep"></i>
      <button class="tb"><svg class="ic"><use href="#vx"/></svg></button>
      <button class="tb"><svg class="ic"><use href="#vy"/></svg></button>
      <button class="tb"><svg class="ic"><use href="#vz"/></svg></button>
      <button class="tb"><svg class="ic"><use href="#vmx"/></svg></button><button class="dd"></button>
      <button class="tb"><svg class="ic"><use href="#scope"/></svg></button><button class="dd"></button>
      <i class="sep"></i>
      <button class="tb"><svg class="ic"><use href="#solid"/></svg></button><button class="dd"></button>
    </div>
    <div class="toolbar">
      <span class="grip"></span>
      <button class="tb"><svg class="ic"><use href="#moment"/></svg></button>
      <button class="tb"><svg class="ic"><use href="#label"/></svg></button>
      <i class="sep"></i>
      <button class="tb"><svg class="ic"><use href="#ires"/></svg></button>
      <button class="tb"><svg class="ic"><use href="#sres"/></svg></button>
      <button class="tb"><svg class="ic"><use href="#vres"/></svg></button>
      <button class="tb"><svg class="ic"><use href="#reac"/></svg></button>
      <button class="tb"><svg class="ic"><use href="#pen"/></svg></button>
      <button class="tb"><svg class="ic"><use href="#selx"/></svg></button><button class="dd"></button>
      <button class="tb"><svg class="ic"><use href="#iwave"/></svg></button>
      <button class="tb"><svg class="ic"><use href="#tab4"/></svg></button>
      <i class="sep"></i>
      <button class="tb"><svg class="ic"><use href="#legend"/></svg></button>
      <button class="tb"><svg class="ic"><use href="#torch"/></svg></button><button class="dd"></button>
      <button class="tb"><svg class="ic"><use href="#rain"/></svg></button><button class="dd"></button>
    </div>
  </div>

  <main class="workspace">
    <aside class="navigator">
      <div class="nav-head">
        <h2>Navigateur de projet - Données</h2>
        <button aria-label="Épingler"><svg width="9" height="10"><path d="M2 1h5v5H2zM0 6.500h9M4.500 7v3M6 1v5" stroke="#555" fill="none"/></svg></button>
        <button aria-label="Fermer le navigateur"><svg width="9" height="9"><path d="M1 1l7 7M8 1L1 8" stroke="#555" stroke-width="1.300"/></svg></button>
      </div>
      <div class="treebox">
        <div class="treewrap">
          <div class="tree">
            <div class="row root"><svg class="logo"><use href="#bridge"/></svg><a href="#" class="sel">RFEM</a></div>
            <ul>
              <li><div class="row"><button class="ex minus"></button><svg class="ic"><use href="#model"/></svg><b>20-07-15_DLUBAL Corner B2-4*</b></div>
                <ul>
                  <li><div class="row"><button class="ex minus"></button><svg class="ic"><use href="#folder-open"/></svg>Données de modèle</div>
                    <ul>
                      <li><div class="row"><button class="ex"></button><svg class="ic"><use href="#f-node"/></svg>Nœuds</div></li>
                      <li><div class="row"><button class="ex"></button><svg class="ic"><use href="#f-line"/></svg>Lignes</div></li>
                      <li><div class="row"><button class="ex"></button><svg class="ic"><use href="#f-mat"/></svg>Matériaux</div></li>
                      <li><div class="row"><button class="ex"></button><svg class="ic"><use href="#f-blue"/></svg>Surfaces</div></li>
                      <li><div class="row"><button class="ex"></button><svg class="ic"><use href="#f-cube"/></svg>Solides</div></li>
                      <li><div class="row leaf"><svg class="ic"><use href="#f-open"/></svg>Ouvertures</div></li>
                      <li><div class="row"><button class="ex"></button><svg class="ic"><use href="#f-sup"/></svg>Appuis nodaux</div></li>
                      <li><div class="row"><button class="ex"></button><svg class="ic"><use href="#f-lsup"/></svg>Appuis linéiques</div></li>
                      <li><div class="row leaf"><svg class="ic"><use href="#f-ssup"/></svg>Appuis de surface</div></li>
                      <li><div class="row leaf"><svg class="ic"><use href="#f-white"/></svg>Articulations linéiques</div></li>
                      <li><div class="row leaf"><svg class="ic"><use href="#f-blue"/></svg>Épaisseurs variables</div></li>
                      <li><div class="row leaf"><svg class="ic"><use href="#f-red"/></svg>Surfaces et membranes orthotropes</div></li>
                      <li><div class="row"><button class="ex"></button><svg class="ic"><use href="#f-sec"/></svg>Sections</div></li>
                      <li><div class="row"><button class="ex"></button><svg class="ic"><use href="#f-hinge"/></svg>Articulations de barre</div></li>
                      <li><div class="row"><button class="ex"></button><svg class="ic"><use href="#f-bar"/></svg>Excentrement de barre</div></li>
                      <li><div class="row leaf"><svg class="ic"><use href="#f-line"/></svg>Divisions de barre</div></li>
                      <li><div class="row"><button class="ex"></button><svg class="ic"><use href="#f-bar"/></svg>Barres</div></li>
                      <li><div class="row leaf"><svg class="ic"><use href="#f-white"/></svg>Nervures</div></li>
                      <li><div class="row leaf"><svg class="ic"><use href="#f-lsup"/></svg>Fondations élastiques de barre</div></li>
                      <li><div class="row leaf"><svg class="ic"><use href="#f-non"/></svg>Non-linéarités de barre</div></li>
                      <li><div class="row leaf"><svg class="ic"><use href="#f-line"/></svg>Ensembles de barres</div></li>
                      <li><div class="row leaf"><svg class="ic"><use href="#f-blue"/></svg>Intersections des surfaces</div></li>
                      <li><div class="row leaf"><svg class="ic"><use href="#f-open"/></svg>Raffinement du maillage EF</div></li>
                      <li><div class="row leaf"><svg class="ic"><use href="#folder"/></svg>Libérations nodales</div></li>
                      <li><div class="row"><button class="ex"></button><svg class="ic"><use href="#folder"/></svg>Types de libérations linéiques</div></li>
                      <li><div class="row leaf"><svg class="ic"><use href="#f-white"/></svg>Libérations linéiques</div></li>
                      <li><div class="row leaf"><svg class="ic"><use href="#f-surf"/></svg>Types de libérations de surface</div></li>
                      <li><div class="row leaf"><svg class="ic"><use href="#f-surf"/></svg>Libérations de surface</div></li>
                      <li><div class="row leaf"><svg class="ic"><use href="#folder"/></svg>Connexion des deux barres</div></li>
                      <li><div class="row leaf"><svg class="ic"><use href="#folder"/></svg>Assemblages</div></li>
                      <li><div class="row"><button class="ex"></button><svg class="ic"><use href="#f-x"/></svg>Connexions nodales</div></li>
                    </ul>
                  </li>
                  <li><div class="row"><button class="ex minus"></button><svg class="ic"><use href="#folder-open"/></svg>Cas de charge et combinaisons</div>
                    <ul>
                      <li><div class="row"><button class="ex"></button><svg class="ic" viewBox="0 0 16 16"><path d="M0 14.500h15" stroke="#444" stroke-width="1.500"/><path d="M10 5h2.500v5h1.500l-3 4-2.500-4H10z" fill="#4070c8"/></svg>Cas de charge</div></li>
                      <li><div class="row"><button class="ex"></button><svg class="ic" viewBox="0 0 16 16"><use href="#combi"/><circle cx="12.500" cy="8" r="3" fill="#5c94f4"/></svg>Actions</div></li>
                      <li><div class="row"><button class="ex"></button><svg class="ic" viewBox="0 0 16 16"><use href="#combi"/><path d="M7 6h9v2H7zM7 9h9v2H7z" fill="#3c6cd4"/></svg>Expressions de combinaison</div></li>
                      <li><div class="row"><button class="ex"></button><svg class="ic" viewBox="0 0 16 16"><use href="#combi"/><path d="M12 4l4 4-4 4-4-4z" fill="#5c94f4"/></svg>Combinaisons d'actions</div></li>
                      <li><div class="row"><button class="ex"></button><svg class="ic" viewBox="0 0 16 16"><use href="#combi"/><path d="M10 6h6v4h-6z" fill="#2cc44c" stroke="#146c24" stroke-width=".7"/></svg>Combinaisons de charge</div></li>
                      <li><div class="row"><button class="ex"></button><svg class="ic" viewBox="0 0 16 16"><use href="#combi"/><path d="M11 6h5v4h-5z" fill="#5c94f4" stroke="#24488c" stroke-width=".7"/></svg>Combinaisons de résultats</div></li>
                    </ul>
                  </li>
                  <li><div class="row"><button class="ex"></button><svg class="ic"><use href="#folder"/></svg>Charges</div></li>
                  <li><div class="row leaf"><svg class="ic"><use href="#folder"/></svg>Résultats</div></li>
                  <li><div class="row leaf"><svg class="ic"><use href="#folder"/></svg>Coupes</div></li>
                  <li><div class="row"><button class="ex"></button><svg class="ic"><use href="#folder"/></svg>Régions moyennes</div></li>
                  <li><div class="row leaf"><svg class="ic"><use href="#folder"/></svg>Rapports d'impression</div></li>
                  <li><div class="row"><button class="ex"></button><svg class="ic"><use href="#folder"/></svg>Objets auxiliaires</div></li>
                  <li class="more"><div class="row"><button class="ex minus"></button><svg class="ic"><use href="#folder-open"/></svg>Modules additionnels</div>
                    <ul>
                      <li><div class="row leaf"><svg class="ic" viewBox="0 0 16 16"><use href="#module"/><path d="M3 10l4-5h6l-2 5z" fill="url(#rainbow)" stroke="#345" stroke-width=".6"/></svg>RF-STEEL Surfaces - Analyse générale des</div></li>
                      <li><div class="row leaf"><svg class="ic" viewBox="0 0 16 16"><use href="#module"/><use href="#ibeam"/></svg><b>RF-STEEL Members - Analyse générale</b></div></li>
                      <li><div class="row leaf"><svg class="ic" viewBox="0 0 16 16"><use href="#module"/><use href="#ibeam"/><text class="tag" x="3" y="14">EC</text></svg>RF-STEEL EC3 - Vérification des barres en</div></li>
                      <li><div class="row leaf"><svg class="ic" viewBox="0 0 16 16"><use href="#module"/><use href="#ibeam"/><text class="tag" x="0" y="14">AISC</text></svg>RF-STEEL AISC - Vérification des barres en</div></li>
                      <li><div class="row leaf"><svg class="ic" viewBox="0 0 16 16"><use href="#module"/><use href="#ibeam"/><text class="tag" x="3" y="14">IS</text></svg>RF-STEEL IS - Vérification des barres en a</div></li>
                      <li class="more"><div class="row leaf"><svg class="ic" viewBox="0 0 16 16"><use href="#module"/><use href="#ibeam"/><text class="tag" x="2" y="14">SIA</text></svg>RF-STEEL SIA - Vérification des barres en</div></li>
                    </ul>
                  </li>
                </ul>
              </li>
            </ul>
          </div>
          <div class="vscroll">
            <button aria-label="Haut"><svg width="8" height="6"><path d="M0 5l4-4 4 4" stroke="#444" stroke-width="2" fill="none"/></svg></button>
            <div class="vthumb"></div><div class="vrest"></div>
            <button aria-label="Bas"><svg width="8" height="6"><path d="M0 1l4 4 4-4" stroke="#444" stroke-width="2" fill="none"/></svg></button>
          </div>
        </div>
        <div class="hscroll">
          <button aria-label="Gauche"><svg width="6" height="8"><path d="M5 0L1 4l4 4" stroke="#444" stroke-width="2" fill="none"/></svg></button>
          <div class="hthumb"></div><div class="hrest"></div>
          <button aria-label="Droite"><svg width="6" height="8"><path d="M1 0l4 4-4 4" stroke="#444" stroke-width="2" fill="none"/></svg></button>
        </div>
      </div>
      <div class="tabs">
        <button class="tab active"><svg class="ic" viewBox="0 0 16 16"><path d="M5 1h11v10H5z" fill="#eaf2fc" stroke="#3a68b0"/><path d="M5 1h11v2H5z" fill="#3a68b0"/><path d="M0 4h7v8H0z" fill="#e8c430" stroke="#8c7412" stroke-width=".6"/><circle cx="9" cy="8" r="3.500" fill="#c4e0f8" stroke="#234a80" stroke-width="1.200"/><path d="M11 11l4 4" stroke="#a0703c" stroke-width="2"/></svg>Données</button>
        <button class="tab"><svg class="ic" viewBox="0 0 16 16"><path d="M1 4h12v11H1z" fill="#eaf2fc" stroke="#2858b0" stroke-width="1.300"/><path d="M3 8h8M3 10.500h8M3 13h8" stroke="#2858b0"/><path d="M4 3l4-2 7 1v5l-6 0z" fill="#8c6c54" stroke="#3c2c20" stroke-width=".6"/></svg>Afficher</button>
        <button class="tab"><svg class="ic" viewBox="0 0 16 16"><path d="M12 1L3 12h5l5-7zM1 14h14M10 9l4 4" fill="#88a8e0" stroke="#2c4ca0" stroke-width="1.500"/></svg>Vues</button>
      </div>
    </aside>

    <section class="canvas" aria-label="Modèle 3D">
      <svg class="scene" viewBox="325 101 1594 1036" preserveAspectRatio="xMinYMin meet">
        <defs>
          <g id="pots"><path d="M-24 0v74c0 9 48 9 48 0V0z"/><ellipse rx="24" ry="7"/></g>
          <g id="springL" fill="none" stroke="#00f0f0" stroke-width="3.500"><path d="M-44 24l54-16M-32 34l64-16M-14 48l58-16M-8 30v36l16 20 8 0M14 30v44l30 30-32 40M10 80l20 10-30 44M-10 85l-34 30 20 24M0 82l-30 34 16 20M-4 130l20 16"/></g>
          <g id="springR" fill="none" stroke="#00f0f0" stroke-width="3.500"><path d="M-64 48l54-16M8 34l56-18M-38 42v34l20 12-40 54 16 10M34 24v40l28 18-50 56M24 66l20 16-44 46M30 90l14-8"/></g>
          <g id="mid">
            <g transform="translate(780 460) scale(.33333)">
              <g>
                <g fill="#00ff00" fill-opacity=".5"><use href="#pots" x="191" y="76"/><use href="#pots" x="209" y="90"/>
                <path d="M96 136L150 178 288 162 304 175 270 218 128 216z"/><path d="M120 205l34-6 126 0q10 22 2 45l-140 12-24-8z"/><path d="M150 178l138-16-30 50-120 4z"/></g>
                <path d="M96 136L238 120 288 161 150 179z" fill="#0a9a0a" fill-opacity=".5"/>
                <path d="M134 206l134-8M130 222l140-4" stroke="#08c408" stroke-opacity=".6" stroke-width="10"/>
                <path d="M115 114l57 42M246 98l58 43" stroke="#2ddf2d" stroke-width="7"/>
              </g>
              <g id="clipL">
                <path d="M65 250l56-8v32l-56 8z" fill="#1414cc"/>
                <path d="M122 244l30-4v34l-30 4zM158 242l28-6 16-2 15 10v32l-16-12-43 10z" fill="#cc7a7a" stroke="#000" stroke-width="3"/>
                <path d="M140 238l42-16 18 10v28l-40 10z" fill="#3aa01e" fill-opacity=".65"/><path d="M146 240v40M152 246v34M158 240v38M182 222v16M198 228v38" stroke="#111" stroke-width="2.500"/><path d="M131 258v5M176 242v4M176 256v4M210 262v5" stroke="#000" stroke-width="4"/>
              </g>
              <g fill="#00ff00" fill-opacity=".5">
                <use href="#pots" x="499" y="307"/><use href="#pots" x="517" y="321"/><use href="#pots" x="576" y="336"/><use href="#pots" x="628" y="376"/>
                <path d="M403 366l50 44 134 60-10 10-150-20z"/><path d="M425 435l160 0 0 50-160 0z"/><circle cx="566" cy="486" r="28"/><circle cx="634" cy="518" r="30"/><path d="M722 458l-80 42-100 0 40-90z"/>
              </g>
              <path d="M403 366l142-14 176 106-136 18L456 408z" fill="#089a08" fill-opacity=".6"/>
              <path d="M545 352l100 60-60 60-90-64z" fill="#00b400" fill-opacity=".45"/>
              <path d="M422 346l62 42M480 362l108 80M552 326l40 24M618 348l103 80" stroke="#25d825" stroke-width="8"/>
              <use href="#clipL" x="307" y="231"/>
              <g fill="#00ff00" fill-opacity=".5"><circle cx="740" cy="594" r="28"/><circle cx="790" cy="588" r="30"/><use href="#pots" x="740" y="674"/><use href="#pots" x="784" y="664"/><path d="M638 678l98-70 60 0 88 54-130 28z"/></g>
              <path d="M650 680l174-44 60 26-150 44z" fill="#00c000" fill-opacity=".5"/>
              <path d="M636 705l76-20M730 738l156-44" stroke="#25c825" stroke-width="8"/>
              <g fill="#6a6af2">
                <path d="M616 560l54 14 130-40v22l-54 16v36l-88 28-44 34v-30l30-34-30-18z"/>
                <path d="M556 522l60 36v12l-60-40zM560 494l26 18-8 6-20-16z" fill="#4545b0"/>
                <path d="M670 570l134-32M620 540l54 32" stroke="#3d3da6" stroke-width="7" fill="none"/>
                <path d="M616 655l42-54" stroke="#3d3da6" stroke-width="10" fill="none"/>
                <path d="M616 566l42 34 88-26M658 600v36" stroke="#3d3da6" stroke-width="3" fill="none"/>
              </g>
              <g>
                <g fill="#00ff00" fill-opacity=".5"><use href="#pots" x="953" y="350"/><use href="#pots" x="987" y="342"/>
                <path d="M850 422l140-10 108-8-60 80-100-8z"/><path d="M888 470q4-18 20-16l140 22q10 24-6 38l-70 10-80-24z"/></g>
                <path d="M850 422l142-40 106 24-30 16-168 20z" fill="#0a9a0a" fill-opacity=".5"/>
                <path d="M935 405l50-24 56 10-80 60z" fill="#00b000" fill-opacity=".4"/>
                <path d="M884 380l112-31M975 414l125-32" stroke="#2ddf2d" stroke-width="7"/>
              </g>
              <path d="M935 507l34-12 40 12 20 4v38l-38-2-10-20-46 10z" fill="#cc7a7a" stroke="#000" stroke-width="3"/>
              <path d="M965 498l38-10 36 16-10 28-60-8z" fill="#2aa01a" fill-opacity=".6"/><path d="M990 508v36M1004 508v40M1016 508v40" stroke="#111" stroke-width="2.500"/>
              <path d="M1030 511l44 20v14l-44 5z" fill="#1414cc"/>
              <g transform="translate(900 120)">
                <g fill="#00ff00" fill-opacity=".5"><use href="#pots" x="555" y="88"/><use href="#pots" x="600" y="76"/>
                <path d="M453 158l100 4 150-14-50 76-80-8z"/><path d="M490 206q4-18 24-18l110 30 16 36-40 12-98-30q-14-12-12-30z"/></g>
                <path d="M453 158l152-44 98 36-50 12-120 20z" fill="#0a9a0a" fill-opacity=".5"/>
                <circle cx="508" cy="212" r="19" fill="#00e000" fill-opacity=".5"/><path d="M545 180q60 8 80 40l-20 26-70-34z" fill="#00b400" fill-opacity=".5"/>
                <path d="M496 113l112-31M550 162l154-47" stroke="#2ddf2d" stroke-width="7"/>
                <path d="M544 242l100-24v40l-90 18-10-6zM658 232l50-12 14 4v34l-60 8z" fill="#cc7a7a" stroke="#000" stroke-width="3"/>
                <path d="M560 240l80-22 26 8v24l-66 20-40-14z" fill="#3a9a28" fill-opacity=".6"/><path d="M556 246v24M600 236v28M642 222v30M672 238v6M672 252v6M700 232v6M700 246v6M710 224v34" stroke="#111" stroke-width="3"/>
                <path d="M724 224l44 18v6l-44 12z" fill="#1414cc"/>
              </g>
            </g>
          </g>
        </defs>

        <g transform="translate(780 120) scale(.33333)">
          <g fill="#9fb0d8" stroke="#999" stroke-width="5">
            <path d="M64 316l118-16 20-24 22 6 10 40-170 28z"/><path d="M372 550l112-14 14-26 30 4 10 22-166 46z"/>
            <path d="M964 540h22l14 34 70 20v34l-108-40z"/><path d="M654 634h20l0 38-56 80v-40l34-40z"/>
          </g>
          <path d="M145 312l40-6v18l-40 8zM440 544l46-4v14l-46 10zM966 544l20 0 10 40-30-8zM658 640h14l-4 34-30 40-6-8z" fill="#79a7ff"/>
          <g fill="#800080"><circle cx="99" cy="320" r="7"/><circle cx="99" cy="338" r="7"/><circle cx="130" cy="325" r="8"/><circle cx="406" cy="552" r="7"/><circle cx="406" cy="569" r="7"/><circle cx="438" cy="557" r="8"/><circle cx="997" cy="577" r="6"/><circle cx="1025" cy="597" r="7"/><circle cx="1048" cy="597" r="7"/><circle cx="1048" cy="615" r="7"/><circle cx="632" cy="716" r="6"/><circle cx="632" cy="733" r="6"/></g>

          <path d="M168 259l36-8 156-16 37 33-180 27z" fill="#b00000" stroke="#000" stroke-width="3"/>
          <path d="M226 296l24-2v50l-24-16z" fill="#f00" stroke="#000" stroke-width="2"/>
          <g fill="#00ff00" fill-opacity=".5"><circle cx="348" cy="208" r="36"/><circle cx="378" cy="228" r="36"/></g>
          <path d="M265 128l130-18 78 62-60 38-70-20z" fill="#22d822" fill-opacity=".8"/><path d="M265 128l130-18 78 62-130 18z" fill="#28a828" fill-opacity=".7"/>
          <g fill="#00f000" fill-opacity=".5"><use href="#pots" x="350" y="68"/><use href="#pots" x="378" y="90"/></g>
          <path d="M252 91l60 43M385 74l60 44" stroke="#2fd02f" stroke-width="8"/>
          <path d="M192 228l40-12 78 38v58l-44 10-14-30-58-26z" fill="#30f0f0" fill-opacity=".75"/><path d="M196 250l60-10 50 24-50 14z" fill="#10c0d0" fill-opacity=".6"/>
          <path d="M239 98h26v150h-26z" fill="#6c6cf0"/><ellipse cx="252" cy="99" rx="13" ry="4" fill="#7f7fff"/>
          <use href="#springL" x="252" y="98"/>

          <g fill="#00ff00" fill-opacity=".5"><path d="M560 570l60-30 40 60-20 50-50-20z" fill="#1ac81a"/><path d="M740 640l100-120 120 70 40 10-90 30 30 16-80 26z"/><circle cx="690" cy="660" r="18"/></g>
          <path d="M475 488l160-18 110 45 70 0 80-24-10 60-150 40-60 60-80-66z" fill="#b00000" stroke="#000" stroke-width="3"/>
          <path d="M555 525l55 70-10-30z" fill="#f4fff4"/>
          <path d="M525 530l26-6v40l-26-16z" fill="#f00"/>
          <path d="M620 632l173-40v46l-120 30z" fill="#f00" stroke="#000" stroke-width="3"/><path d="M676 636l117-40v-10l-130 40z" fill="#b00000" stroke="#000" stroke-width="2"/>
          <path d="M654 634h20v38l-30 42-26 38v-40l34-40z" fill="#8fa8e0" stroke="#888" stroke-width="4"/><path d="M656 640l-6 40-30 38" fill="none" stroke="#111" stroke-width="4"/><path d="M628 712h8v8h-8zM628 730h8v8h-8z" fill="#800080"/>
          <path d="M910 556l56-12v46l-56 12zM986 540l24-6v40l-14-6z" fill="#f00" stroke="#000" stroke-width="3"/><path d="M910 550l120-26" stroke="#900" stroke-width="4"/>
          <g fill="#00e400" fill-opacity=".6"><path d="M780 540l56-66v60l36-64v60l60 0-60 110-40 18-60-10z"/><path d="M762 655l74-16 104 4-60 16-44 10z" fill="#009a00"/><use href="#pots" x="836" y="606"/><use href="#pots" x="890" y="592"/><path d="M800 560l30-70 10 150zM850 640l40-140 20 120z"/></g>
          <g fill="#30e8e8" fill-opacity=".75"><path d="M500 468l34-20 80 34v30l-60 16-50-24zM596 540l60-18 60 36-10 30-70 12-30-28zM700 566l60-20 50 20-30 20-60 6zM880 506l40-16 50 20-60 22zM940 482l50-6 30 12-70 20z"/></g>
          <path d="M506 488l54-14 50 22-50 18zM604 556l56-14 50 24-60 20z" fill="#0fa8b8" fill-opacity=".6"/>
          <g fill="#6c6cf0"><path d="M546 330h27v150h-27zM644 403h25v146h-25zM738 410h26v148h-26zM927 356h26v140h-26z"/></g>
          <g fill="#8080ff"><ellipse cx="559" cy="331" rx="13" ry="4"/><ellipse cx="656" cy="404" rx="13" ry="4"/><ellipse cx="751" cy="411" rx="13" ry="4"/><ellipse cx="940" cy="357" rx="13" ry="4"/></g>
          <use href="#springL" x="559" y="328"/><use href="#springL" x="656" y="400"/><use href="#springR" x="751" y="406"/><use href="#springR" x="940" y="352"/>

          <g transform="translate(900 120)">
            <g fill="#00e400" fill-opacity=".6"><circle cx="302" cy="306" r="36"/><path d="M200 385l80-60 60 16 66 40-90 32z" fill="#18c818"/><path d="M388 338l90-40 60-6 56 52-110 30z" fill="#18c818"/><use href="#pots" x="303" y="379"/><use href="#pots" x="492" y="340"/></g>
            <path d="M386 374l114-32M484 404l112-31" stroke="#2fc82f" stroke-width="8"/>
            <path d="M284 274l226-65 100 16 70 24-250 74-60-20z" fill="#b00000" stroke="#000" stroke-width="3"/><path d="M460 222l60 30M480 216l60 30" stroke="#000" stroke-width="3"/>
            <path d="M626 262l50-12 16 6 14 28 66 24v30l-146-54z" fill="#84c400" stroke="#000" stroke-width="3"/><path d="M706 284v32" stroke="#000" stroke-width="2"/>
            <path d="M402 276l70-18 60-24 70-6 24 40v26l-60 16-70-14-80 40z" fill="#30f0f0" fill-opacity=".8"/><path d="M402 276l120-44 80-6 30 16-200 54z" fill="#0f7f88" fill-opacity=".8"/>
            <path d="M544 88h28v150h-28z" fill="#6c6cf0"/><ellipse cx="558" cy="89" rx="14" ry="4" fill="#8080ff"/>
            <path d="M416 170l54-16M442 162v34l28 12-50 50 24 14M498 146l112-32M526 138v36l26 12-50 50 24 12M582 122v36l28 10-54 54 20 12M606 168l-56 56" fill="none" stroke="#00f0f0" stroke-width="4"/>
          </g>
        </g>

        <use href="#mid"/>
        <use href="#mid" y="318"/>
        <path d="M1320 892l16 6v11l-16-6z" fill="#1414cc"/>

        <g fill="#6969ff">
          <path d="M791 188h10v734h-10zM894 262h10v736h-10z"/>
          <path d="M791 188l2-5 194 138-6 12-4-3L791 195z"/>
          <path d="M797 546l179 134v12L797 558z"/>
          <path d="M793 922l4-3 179 133v13L793 927z"/>
        </g>
        <path d="M793 183l194 138M797 546l179 134M797 919l179 133" stroke="#3a3aa0" stroke-width="1.200"/>
        <g fill="#7070ff">
          <path d="M1137 284h11v730h-11zM1336 226h10v732h-10z"/>
          <path d="M982 322l360-102v10l-6 4-354 98z"/><path d="M985 681l351-98v11l-351 99z"/><path d="M982 1057l360-103v12L982 1067z"/>
        </g>
        <path d="M985 681l351-98M982 1057l360-103" stroke="#5050b8"/>
        <path d="M976 330h9v735h-9z" fill="#5f5ff0"/>
        <path d="M979 322h4v6h-4z" fill="#a00030"/><path d="M980 1063v5M983 1063v5" stroke="#d03050"/>

        <g>
          <path d="M1078 282v-38" stroke="#0000d8" stroke-width="2"/><path d="M1075 253l3-11 3 11z" fill="#0000d8"/><path d="M1077 282l-35 11" stroke="#f00" stroke-width="2"/><path d="M1078 282l24 7" stroke="#00d800" stroke-width="3"/>
          <text class="axis" x="1075" y="238" fill="#0000d8">Z</text><text class="axis" x="1108" y="296" fill="#0d0">Y</text>
          <path d="M380 993v-30" stroke="#0000d8" stroke-width="2"/><path d="M377 964l3-12 3 12z" fill="#0000d8"/>
          <path d="M380 993l-22 6" stroke="#f00" stroke-width="2"/><path d="M362 994l-13 7 14 1z" fill="#f00"/>
          <path d="M380 993l18 7" stroke="#0c0" stroke-width="2"/><path d="M397 994l11 8-13 0z" fill="#0c0"/>
          <text class="axis" x="377" y="950" fill="#0000d8">Z</text><text class="axis" x="340" y="1008" fill="#f00">X</text><text class="axis" x="411" y="1009" fill="#0c0">Y</text>
        </g>

        <g stroke="#000080" fill="none">
          <path d="M1345 224l122-35M1346 267l54-15M1346 585l54-16M1319 572l17-5M1320 578l16-4M1346 579l9 4M1346 903l54-15M1342 959l125-36M1345 961l53 18M1147 1017l51 18M987 1063l51 18M791 923l-52 7M893 1000l-51 7M976 1062l-52 7"/>
          <g marker-start="url(#arr)" marker-end="url(#arr)">
            <path d="M1462.500 192v732"/><path d="M1395.500 210v42"/><path d="M1395.500 253v317"/><path d="M1395.500 570v318"/><path d="M1395.500 888v55"/>
            <path d="M1393 978l-196 55"/><path d="M1193 1034l-156 46"/><path d="M745 930l101 76"/><path d="M848 1007l79 61"/>
          </g>
        </g>
        <g class="dim">
          <text transform="translate(1467 557) rotate(-90)">7.800 m</text>
          <text transform="translate(1400 411) rotate(-90)">3.380 m</text>
          <text transform="translate(1400 730) rotate(-90)">3.380 m</text>
          <text transform="translate(1400 916) rotate(-90)">0.580 m</text>
          <text transform="translate(1295 1011) rotate(-16)">2.700 m</text>
          <text transform="translate(1116 1061) rotate(-16)">2.182 m</text>
          <text transform="translate(792 972) rotate(37)">2.675 m</text>
          <text transform="translate(884 1041) rotate(37)">2.164 m</text>
        </g>
      </svg>
    </section>
  </main>

  <footer class="status">
    <span class="hint">Plan de travail</span>
    <div class="toggles">
      <button>SAISIE</button><button class="up">GRILLE</button><button class="wide">CARTES</button><button>SAISIE D'OB.</button><button>GLIGNES</button><button>DXF</button>
    </div>
    <div class="coords"><span class="cs">SC : Global XYZ</span><span class="pl">Plan: XY</span><span class="xy">X:&nbsp; -0.153 m</span><span class="xy">Y:&nbsp; 11.932 m</span><span class="xy">Z:&nbsp; 0.000 m</span></div>
  </footer>
</div>
</body>
</html>
```
FILE: styles.css
```css
* { box-sizing: border-box; }
html, body { height: 100%; margin: 0; }
body { font: 11px/18px "Noto Sans", "Open Sans", sans-serif; color: #000; background: #cfd4de; overflow: hidden; }
button { font: inherit; color: inherit; background: none; border: 0; padding: 0; margin: 0; display: flex; align-items: center; justify-content: center; }
h1, h2 { font: inherit; margin: 0; }
svg { display: block; flex: none; }
.defs { position: absolute; width: 0; height: 0; }
.ic { width: 16px; height: 16px; }
.logo { width: 16px; height: 14px; }
.app { display: flex; flex-direction: column; height: 100vh; }

.titlebar { display: flex; align-items: center; height: 23px; background: #0078d7; color: #fff; padding-left: 2px; gap: 5px; flex: none; }
.wincontrols { margin-left: auto; display: flex; height: 100%; }
.wincontrols button { width: 46px; }

.menubar { display: flex; align-items: center; height: 24px; background: #cfd3dc; color: #45475c; padding-left: 3px; flex: none; }
.menubar > .grip { margin-right: 4px; }
.menubar > .logo { margin-right: 3px; }
.menubar > button { padding: 0 7px; }
.mdi { margin-left: auto; display: flex; gap: 9px; padding-right: 4px; }

.toolrow { display: flex; height: 26px; background: #cfd3dc; flex: none; }
.toolbar { display: flex; align-items: center; height: 26px; padding: 1px 4px 0 3px; background: linear-gradient(#eaeef7, #dfe4ee 50%, #cdd2de); border-bottom: 1px solid #a3a9b8; border-radius: 0 3px 3px 0; }
.grip { width: 3px; height: 15px; margin-right: 4px; background: radial-gradient(circle at 1px 1px, #9aa0ae 1px, transparent 1px) 0 0 / 3px 4px; flex: none; }
.tb { width: 22px; height: 22px; flex: none; }
.tb.on { border: 1px solid #b8975a; background: linear-gradient(#fdd9a0, #fbb660 60%, #fde3a8); border-radius: 2px; }
.sep { width: 8px; height: 17px; flex: none; background: linear-gradient(#8f96a6, #8f96a6) 3px 0 / 1px 100% no-repeat; }
.dd { width: 13px; height: 22px; flex: none; }
.dd::before { content: ""; border: 3px solid transparent; border-top: 4px solid #5b6070; border-bottom: 0; }
.combo { position: relative; display: flex; width: 214px; height: 22px; margin: 0 2px; }
.combo select { flex: 1; min-width: 0; appearance: none; font: inherit; color: #000; background: #fff; border: 0; border-radius: 0; padding: 0 4px; }
.combo::after { content: ""; position: absolute; right: 4px; top: 9px; border: 3px solid transparent; border-top: 4px solid #666; border-bottom: 0; }

.workspace { display: flex; flex: 1; min-height: 0; gap: 4px; }
.navigator { width: 319px; flex: none; display: flex; flex-direction: column; }
.nav-head { display: flex; align-items: center; gap: 10px; height: 20px; padding: 0 5px 0 4px; background: #e6ebf5; border-top: 1px solid #a6abba; border-bottom: 1px solid #b3b8c6; color: #45475c; flex: none; }
.nav-head h2 { flex: 1; }
.treebox { flex: 1; min-height: 0; display: flex; flex-direction: column; border: 3px solid #e9eef8; border-right: 4px solid #e9eef8; outline: 1px solid #8f94a3; outline-offset: -1px; background: #f0f0f0; }
.treewrap { display: flex; flex: 1; min-height: 0; border-left: 1px solid #828790; }
.tree { flex: 1; min-width: 0; overflow: hidden; background: #fcfbf3; white-space: nowrap; }
.tree ul { list-style: none; margin: 0; padding: 0 0 0 19px; }
.tree > ul { padding-left: 5px; }
.tree li { position: relative; }
.tree li::before { content: ""; position: absolute; left: 6px; top: 0; bottom: 0; border-left: 1px dotted #888; }
.tree li:last-child::before { bottom: auto; height: 9px; }
.tree li.more::before { bottom: 0; height: auto; }
.row { position: relative; display: flex; align-items: center; height: 18px; }
.row .ic { margin-right: 4px; }
.row.root { padding-left: 3px; gap: 4px; }
.sel { background: #0078d7; color: #fff; text-decoration: none; padding: 0 2px; outline: 1px dotted #e08a3c; outline-offset: -1px; height: 18px; }
.ex { position: relative; flex: none; width: 9px; height: 9px; margin: 0 7px 0 2px; border: 1px solid #969696; border-radius: 1px; background: linear-gradient(#2c4a8c, #2c4a8c) center / 5px 1px no-repeat, linear-gradient(#2c4a8c, #2c4a8c) center / 1px 5px no-repeat, #f8f8f8; }
.ex.minus { background: linear-gradient(#2c4a8c, #2c4a8c) center / 5px 1px no-repeat, #f8f8f8; }
.ex::after { content: ""; position: absolute; left: 9px; top: 3px; width: 5px; border-top: 1px dotted #888; }
.row.leaf::before { content: ""; flex: none; width: 10px; margin: 0 1px 0 7px; border-top: 1px dotted #888; }
.tag { font: bold 6px "Liberation Sans", sans-serif; fill: #222; }
.vscroll { width: 16px; flex: none; display: flex; flex-direction: column; background: #f0f0f0; }
.vscroll button { height: 17px; }
.vthumb { flex: 430; background: #cdcdcd; }
.vrest { flex: 509; }
.hscroll { display: flex; height: 17px; flex: none; background: #f0f0f0; padding-right: 16px; }
.hscroll button { width: 17px; }
.hthumb { flex: 117; background: #cdcdcd; margin: 1px 0; }
.hrest { flex: 144; }
.tabs { display: flex; height: 24px; align-items: flex-start; padding-left: 4px; gap: 5px; color: #45475c; flex: none; }
.tab { height: 20px; gap: 2px; padding: 0 3px 0 2px; }
.tab.active { background: #f4f6fa; border: 1px solid #b0dce8; border-top: 0; border-radius: 0 0 4px 4px; }
.canvas { flex: 1; min-width: 0; background: #fff; border: 1px solid #dfe2e8; border-top: 2px solid #6e6e6e; border-left: 2px solid #6e6e6e; border-bottom: 2px solid #dfe2e8; }
.scene { width: 100%; height: 100%; }
.dim text { font: bold 11px "Liberation Sans", Arial, sans-serif; fill: #000080; text-anchor: middle; stroke: #fff; stroke-width: 5px; paint-order: stroke; }
.axis { font: 9px "Liberation Sans", Arial, sans-serif; }

.status { display: flex; align-items: center; height: 21px; flex: none; background: linear-gradient(#e4e6ec, #a9aeb8 45%, #b6bac3); border-top: 1px solid #9da1ad; color: #2c2c36; }
.hint { flex: 1; padding-left: 4px; }
.toggles { display: flex; gap: 3px; height: 100%; margin-right: 102px; }
.toggles button { padding: 0 2px; border: 1px solid #fff; border-top-color: #222; border-left-color: #222; }
.toggles .up { border-color: #fff #8a8e98 #8a8e98 #fff; align-items: flex-start; }
.toggles .wide { padding: 0 7px; }
.coords { display: flex; }
.coords span { border-left: 1px solid #8f939e; padding-left: 2px; }
.coords .cs { width: 88px; border: 0; }
.coords .pl { width: 88px; }
.coords .xy { width: 74px; }
```
